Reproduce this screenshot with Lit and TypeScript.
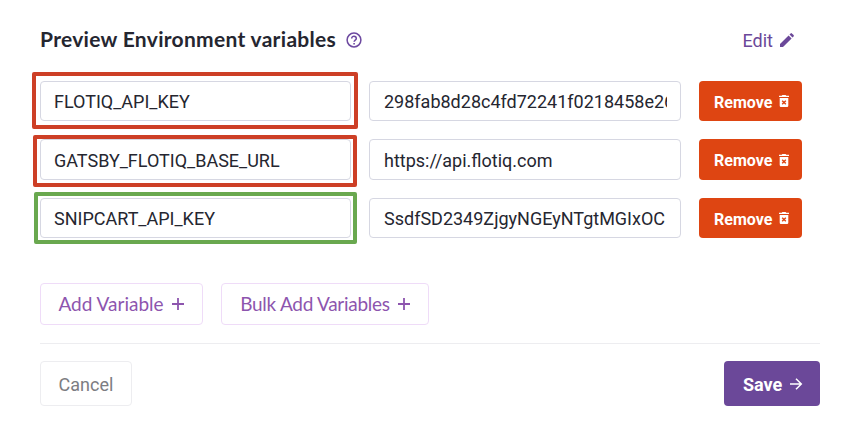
import { LitElement, html, css } from "lit";
import { customElement } from "lit/decorators.js";

const help = html`<svg class="help" viewBox="0 0 16 16" fill="none" stroke="currentColor"><circle cx="8" cy="8" r="6.900" stroke-width="1.500"/><path d="M5.700 6.500c0-3.200 4.600-2.900 4.600-.1 0 1.600-2.200 1.700-2.200 3.400" stroke-width="1.500"/><path d="M8.100 10.900v1.600" stroke-width="1.600"/></svg>`;
const pencil = html`<svg class="pencil" viewBox="0 0 14 14" fill="currentColor"><path d="M0 11 8.600 2.400l3 3L3 14H0zM9.500 1.500 10.600.4q.7-.6 1.300 0l1.700 1.700q.6.6 0 1.300L12.500 4.500z"/></svg>`;
const trash = html`<svg class="trash" viewBox="0 0 10 12"><path fill="currentColor" fill-rule="evenodd" d="M0 .7h2.700L3.400 0h3.200l.7.7H10V2H0zM.7 3h8.600v7.800q0 1.200-1.200 1.200H1.900Q.7 12 .7 10.800z"/><path d="m3.200 5.700 3.600 3.600m0-3.600L3.200 9.300" stroke="#de4512" stroke-width="1.400"/></svg>`;
const plus = html`<svg class="plus" viewBox="0 0 12 12" fill="none" stroke="currentColor" stroke-width="1.800"><path d="M6 0v12M0 6h12"/></svg>`;
const arrow = html`<svg class="arrow" viewBox="0 0 12 12" fill="none" stroke="currentColor" stroke-width="1.500"><path d="M0 6h11M6 .7 11.300 6 6 11.300"/></svg>`;

const rows = [
  { name: "FLOTIQ_API_KEY", value: "298fab8d28c4fd72241f0218458e26", mark: "first" },
  { name: "GATSBY_FLOTIQ_BASE_URL", value: "https://api.flotiq.com", mark: "second" },
  { name: "SNIPCART_API_KEY", value: "SsdfSD2349ZjgyNGEyNTgtMGIxOC", mark: "third" },
];

@customElement("app-root")
export class AppRoot extends LitElement {
  static styles = css`
    :host { display: block; width: 860px; height: 438px; box-sizing: border-box; padding: 22px 40px 0; background: #fff; color: #252630; font-family: Roboto, sans-serif; overflow: hidden; }
    * { box-sizing: border-box; }
    svg { display: block; flex: none; overflow: visible; }
    header { display: flex; align-items: center; height: 37px; padding-right: 26px; }
    h1 { margin: 0; padding-bottom: 3px; font: 700 21px/34px Lato, sans-serif; width: 296px; white-space: nowrap; letter-spacing: .3px; }
    .help { width: 16px; height: 16px; margin: 0 0 2px 10px; color: #6d49a0; }
    .edit { margin-left: auto; display: flex; align-items: center; font-size: 18px; color: #6b4899; gap: 7px; }
    .pencil { width: 14px; height: 14px; margin-bottom: 1px; }
    .rows { display: grid; grid-template-rows: 40px 41px 40px; row-gap: 18px; padding-top: 22px; }
    .row { display: grid; grid-template-columns: 311px 312px 103px; column-gap: 18px; }
    .cell { position: relative; min-width: 0; display: flex; }
    .field { flex: 1; min-width: 0; border: 1px solid #d6d7e2; border-radius: 4px; padding: 2px 13px 0; display: flex; align-items: center; font-size: 18px; }
    .value { padding: 2px 13px 0 14px; }
    .clip { overflow: hidden; white-space: nowrap; line-height: 30px; flex: 1; }
    .mark { position: absolute; border: 4px solid #cd3f26; border-radius: 2px; }
    .first { inset: -9px -7px -8px -8px; }
    .second { inset: -4px -6px -7px -7px; }
    .third { inset: -6px -6px -6px -6px; border-color: #69a84f; }
    button { display: flex; align-items: center; margin: 0; border: 0; padding: 0; border-radius: 4px; background: #fff; font-family: Roboto, sans-serif; white-space: nowrap; }
    .remove { background: #de4512; color: #fff; font-size: 16px; font-weight: 700; padding-left: 15px; gap: 7px; }
    .remove span { padding-top: 2px; }
    .trash { width: 10px; height: 12px; }
    .adds { display: flex; gap: 18px; margin-top: 45px; }
    .add { height: 42px; width: 163px; border: 1px solid #efdcf8; color: #8d55ae; font: 400 19px Lato, sans-serif; padding-left: 17px; }
    .bulk { width: 208px; padding-left: 18px; }
    .add .label { width: 106px; padding-bottom: 2px; }
    .add.bulk .label { width: 150px; letter-spacing: -.27px; }
    .plus { width: 12px; height: 12px; margin-left: 8px; }
    footer { display: flex; justify-content: space-between; margin-top: 18px; padding-top: 17px; border-top: 1px solid #ededf0; }
    .cancel { width: 92px; height: 45px; border: 1px solid #ededf0; font-size: 18px; color: #7c7d82; justify-content: center; padding-top: 2px; }
    .save { width: 96px; height: 45px; background: #6b4899; color: #fff; font-size: 18px; font-weight: 700; padding-left: 19px; gap: 8px; }
    .save span { padding-top: 2px; }
    .arrow { width: 12px; height: 12px; }
  `;

  render() {
    return html`
      <header><h1>Preview Environment variables</h1>${help}<div class="edit">Edit ${pencil}</div></header>
      <main>
        <div class="rows">
          ${rows.map((r) => html`<div class="row">
            <div class="cell"><div class="field"><span class="clip">${r.name}</span></div><div class="mark ${r.mark}"></div></div>
            <div class="cell"><div class="field value"><span class="clip">${r.value}</span></div></div>
            <button class="remove"><span>Remove</span>${trash}</button>
          </div>`)}
        </div>
        <div class="adds">
          <button class="add"><span class="label">Add Variable</span>${plus}</button>
          <button class="add bulk"><span class="label">Bulk Add Variables</span>${plus}</button>
        </div>
      </main>
      <footer><button class="cancel">Cancel</button><button class="save"><span>Save</span>${arrow}</button></footer>
    `;
  }
}
